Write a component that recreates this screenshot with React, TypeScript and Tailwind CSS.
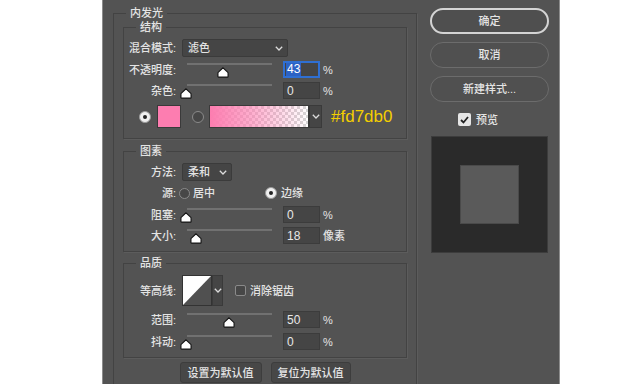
import React from "react";

const txt = "text-[11px] leading-[12px] text-[#e4e4e4] font-medium";

function Chevron() {
  return (
    <svg width="8" height="5" viewBox="0 0 8 5">
      <polyline points="0.8,0.8 4,4 7.2,0.8" fill="none" stroke="#dcdcdc" strokeWidth="1.3" />
    </svg>
  );
}

function Thumb() {
  return (
    <svg width="12" height="11" viewBox="0 0 12 11">
      <path
        d="M6 0.9 L10.6 5.1 Q11.1 5.6 11.1 6.3 V9.4 Q11.1 10.1 10.4 10.1 H1.6 Q0.9 10.1 0.9 9.4 V6.3 Q0.9 5.6 1.4 5.1 Z"
        fill="#ffffff"
        stroke="#161616"
        strokeWidth="1.2"
      />
    </svg>
  );
}

function Slider({ pct }: { pct: number }) {
  return (
    <div className="relative w-[90px] h-[17px] shrink-0">
      <div className="ml-[5px] mt-[3px] h-[2px] w-[85px] bg-[#717171]" />
      <div className="absolute top-[4px] leading-none" style={{ left: 4 + (pct * 86) / 100 - 6 }}>
        <Thumb />
      </div>
    </div>
  );
}

function Num({ v, focus }: { v: string; focus?: boolean }) {
  if (focus) {
    return (
      <div className="ml-[11px] w-[37px] h-[17px] border-2 border-[#2f6fd2] bg-[#454545] flex items-center pl-[1px]">
        <span className="bg-[#2c62c4] text-white text-[12px] leading-[13px] px-[1px]">{v}</span>
      </div>
    );
  }
  return (
    <div className="ml-[11px] w-[37px] h-[17px] border border-[#3c3c3c] bg-[#454545] flex items-center pl-[3px] text-[12px] text-[#e8e8e8]">
      {v}
    </div>
  );
}

function Label({ children }: { children: React.ReactNode }) {
  return <div className={`w-[52px] shrink-0 text-right ${txt}`}>{children}</div>;
}

function SliderRow({ label, pct, v, unit, focus, className }: { label: string; pct: number; v: string; unit: string; focus?: boolean; className: string }) {
  return (
    <div className={`flex items-center h-[17px] ${className}`}>
      <Label>{label}</Label>
      <div className="ml-[6px]">
        <Slider pct={pct} />
      </div>
      <Num v={v} focus={focus} />
      <span className={`ml-[3px] ${txt}`}>{unit}</span>
    </div>
  );
}

function Radio({ on, size = 12 }: { on?: boolean; size?: number }) {
  return on ? (
    <div className="w-[12px] h-[12px] rounded-full bg-[#efefef] border border-[#9a9a9a] flex items-center justify-center shrink-0">
      <div className="w-[4px] h-[4px] rounded-full bg-[#222]" />
    </div>
  ) : (
    <div className={`${size === 12 ? "w-[12px] h-[12px]" : "w-[11px] h-[11px]"} rounded-full bg-[#474747] border border-[#8a8a8a] shrink-0`} />
  );
}

function Group({ title, className, children }: { title: string; className?: string; children: React.ReactNode }) {
  return (
    <fieldset className={`border border-[#434343] shadow-[1px_1px_0_#5c5c5c] ${className ?? ""}`}>
      <legend className={`ml-[12px] px-[4px] ${txt}`}>{title}</legend>
      {children}
    </fieldset>
  );
}

export default function App() {
  return (
    <div className="w-[640px] h-[384px] bg-white font-['Liberation_Sans','Noto_Sans_CJK_SC',sans-serif] overflow-hidden">
      <div className="ml-[102px] w-[458px] h-[384px] bg-[#535353] border-x border-[#8c8c8c] flex items-start overflow-hidden">
        {/* left */}
        <div className="pt-[7px] ml-[10px]">
          <fieldset className="w-[304px] h-[400px] border border-[#434343] shadow-[1px_1px_0_#5c5c5c] px-[9px]">
            <legend className={`ml-[3px] px-[4px] ${txt}`}>内发光</legend>

            <Group title="结构" className="mt-[2px] pb-[10px]">
              <div className="flex items-center h-[18px] mt-[6px]">
                <Label>混合模式:</Label>
                <div className="ml-[6px] w-[106px] h-[18px] bg-[#454545] border border-[#3b3b3b] rounded-[2px] flex items-center justify-between pl-[5px] pr-[4px]">
                  <span className={txt}>滤色</span>
                  <Chevron />
                </div>
              </div>
              <SliderRow label="不透明度:" pct={43} v="43" unit="%" focus className="mt-[4px]" />
              <SliderRow label="杂色:" pct={0} v="0" unit="%" className="mt-[4px]" />
              <div className="flex items-center h-[23px] mt-[6px]">
                <div className="ml-[15px]">
                  <Radio on />
                </div>
                <div className="ml-[6px] w-[24px] h-[23px] bg-[#fd7db0] border border-[#3a3a3a]" />
                <div className="ml-[11px]">
                  <Radio />
                </div>
                <div className="ml-[5px] w-[100px] h-[23px] border border-[#3a3a3a] bg-[repeating-conic-gradient(#d6d6d6_0_25%,#ffffff_0_50%)] bg-[length:6px_6px]">
                  <div className="w-full h-full bg-[linear-gradient(to_right,#fd7db0_0%,rgba(253,125,176,0.6)_45%,rgba(253,125,176,0)_100%)]" />
                </div>
                <div className="w-[13px] h-[23px] bg-[#454545] border border-[#3a3a3a] flex items-center justify-center">
                  <Chevron />
                </div>
                <span className="ml-[9px] text-[17px] leading-[20px] text-[#f3cf00]">#fd7db0</span>
              </div>
            </Group>

            <Group title="图素" className="mt-[6px] pb-[7px]">
              <div className="flex items-center h-[18px] mt-[6px]">
                <Label>方法:</Label>
                <div className="ml-[6px] w-[50px] h-[18px] bg-[#454545] border border-[#3b3b3b] rounded-[2px] flex items-center justify-between pl-[5px] pr-[4px]">
                  <span className={txt}>柔和</span>
                  <Chevron />
                </div>
              </div>
              <div className="flex items-center h-[14px] mt-[5px]">
                <Label>源:</Label>
                <div className="ml-[3px]">
                  <Radio size={11} />
                </div>
                <span className={`ml-[3px] ${txt}`}>居中</span>
                <div className="ml-[50px]">
                  <Radio on />
                </div>
                <span className={`ml-[4px] ${txt}`}>边缘</span>
              </div>
              <SliderRow label="阻塞:" pct={0} v="0" unit="%" className="mt-[6px]" />
              <SliderRow label="大小:" pct={12} v="18" unit="像素" className="mt-[4px]" />
            </Group>

            <Group title="品质" className="mt-[5px] pb-[7px]">
              <div className="flex items-center h-[31px] mt-[6px]">
                <Label>等高线:</Label>
                <div className="ml-[6px] w-[30px] h-[31px] border border-[#333] bg-[#505050]">
                  <svg width="28" height="29" viewBox="0 0 28 29" className="block">
                    <polygon points="0,0 28,0 0,29" fill="#ffffff" />
                  </svg>
                </div>
                <div className="w-[11px] h-[31px] bg-[#454545] border border-[#3a3a3a] flex items-center justify-center">
                  <Chevron />
                </div>
                <div className="ml-[12px] w-[11px] h-[11px] rounded-[2px] bg-[#474747] border border-[#8a8a8a]" />
                <span className={`ml-[4px] ${txt}`}>消除锯齿</span>
              </div>
              <SliderRow label="范围:" pct={50} v="50" unit="%" className="mt-[5px]" />
              <SliderRow label="抖动:" pct={0} v="0" unit="%" className="mt-[5px]" />
            </Group>

            <div className="flex justify-center gap-[9px] mt-[4px]">
              <div className={`w-[82px] h-[21px] bg-[#474747] border border-[#3d3d3d] rounded-[3px] flex items-center justify-center ${txt}`}>设置为默认值</div>
              <div className={`w-[80px] h-[21px] bg-[#474747] border border-[#3d3d3d] rounded-[3px] flex items-center justify-center ${txt}`}>复位为默认值</div>
            </div>
          </fieldset>
        </div>

        {/* right */}
        <div className="ml-[13px] pt-[8px] w-[119px] flex flex-col">
          <div className={`h-[26px] rounded-full border-2 border-[#d4d4d4] bg-[#4f4f4f] flex items-center justify-center ${txt}`}>确定</div>
          <div className={`mt-[8px] h-[26px] rounded-full border-[1.5px] border-[#6c6c6c] bg-[#505050] flex items-center justify-center ${txt}`}>取消</div>
          <div className={`mt-[8px] h-[26px] rounded-full border-[1.5px] border-[#6c6c6c] bg-[#505050] flex items-center justify-center ${txt}`}>新建样式...</div>
          <div className="mt-[11px] flex items-center ml-[28px] h-[13px]">
            <div className="w-[13px] h-[13px] rounded-[2px] bg-[#e6e6e6] flex items-center justify-center">
              <svg width="9" height="8" viewBox="0 0 9 8">
                <polyline points="1,4 3.5,6.5 8,1" fill="none" stroke="#222" strokeWidth="1.8" />
              </svg>
            </div>
            <span className={`ml-[5px] ${txt}`}>预览</span>
          </div>
          <div className="mt-[10px] ml-[1px] w-[117px] h-[117px] bg-[#2a2a2a] border border-[#3c3c3c] flex items-center justify-center">
            <div className="w-[59px] h-[59px] bg-[#5a5a5a] border border-[#4a4a4a]" />
          </div>
        </div>
      </div>
    </div>
  );
}
